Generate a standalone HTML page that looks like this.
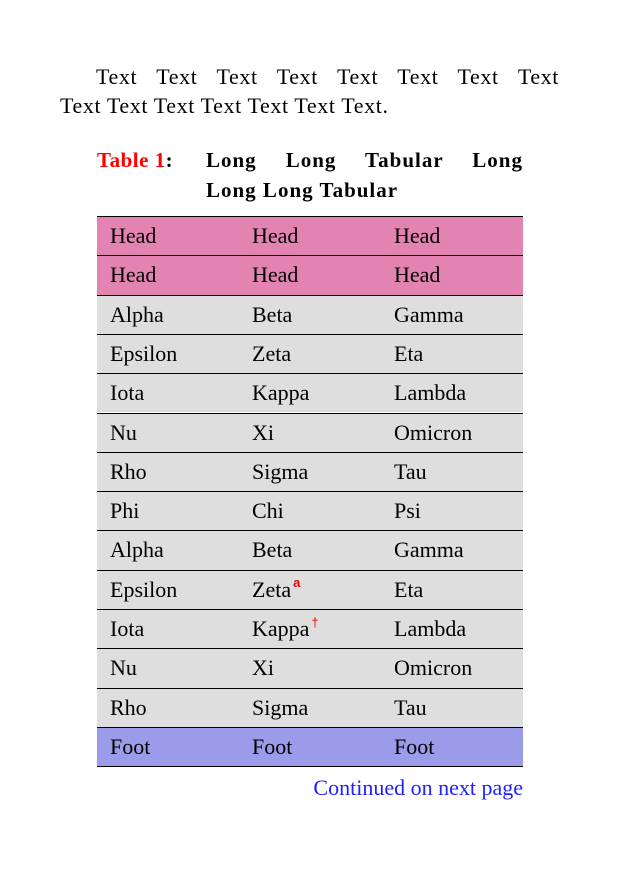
<!DOCTYPE html>
<html><head><meta charset="utf-8"><style>
body{margin:0;width:621px;height:875px;background:#fff;font-family:"Liberation Serif","Times New Roman","DejaVu Serif",serif;color:#000;position:relative;overflow:hidden}
.a{position:absolute;white-space:nowrap;font-size:22px;line-height:1}
.row{position:absolute;left:97px;width:426px;height:39.3px;border-top:1px solid #000;box-sizing:border-box}
.row span{position:absolute;top:8px;font-size:22px;line-height:1}
.c1{left:13px}.c2{left:155px}.c3{left:297px}
sup{font-family:"Liberation Sans","DejaVu Sans",sans-serif;color:#e00;font-size:13px;font-weight:bold;position:relative;top:-1px;margin-left:2px;vertical-align:super;line-height:0}
</style></head><body>
<div class="a" style="left:96px;top:66px;width:463px;text-align:justify;text-align-last:justify;letter-spacing:0.6px">Text Text Text Text Text Text Text Text</div>
<div class="a" style="left:60px;top:95px;letter-spacing:0.6px">Text Text Text Text Text Text Text.</div>
<div class="a" style="left:97px;top:150px;font-weight:bold;font-size:21px;letter-spacing:0.5px"><span style="color:#f00">Table 1</span>:</div>
<div class="a" style="left:206px;top:150px;width:317px;font-weight:bold;font-size:21px;text-align:justify;text-align-last:justify;letter-spacing:1px">Long Long Tabular Long</div>
<div class="a" style="left:206px;top:180px;font-weight:bold;font-size:21px;letter-spacing:1px">Long Long Tabular</div>
<div id="t"></div>
<div class="a" style="left:268px;top:777px;color:#2020ff;width:255px;text-align:right">Continued on next page</div>
<script>
var d=[["Head","Head","Head","#e283b1"],["Head","Head","Head","#e283b1"],["Alpha","Beta","Gamma"],["Epsilon","Zeta","Eta"],["Iota","Kappa","Lambda"],["Nu","Xi","Omicron"],["Rho","Sigma","Tau"],["Phi","Chi","Psi"],["Alpha","Beta","Gamma"],["Epsilon","Zeta<sup>a</sup>","Eta"],["Iota","Kappa<sup style=\"font-weight:normal\">†</sup>","Lambda"],["Nu","Xi","Omicron"],["Rho","Sigma","Tau"],["Foot","Foot","Foot","#9b9be9"]];
var h="";d.forEach(function(r,i){var top=216+i*39.3;h+='<div class="row" style="top:'+top.toFixed(1)+'px;background:'+(r[3]||"#dedede")+(i==13?';border-bottom:1px solid #000;height:40.3px':'')+'"><span class="c1">'+r[0]+'</span><span class="c2">'+r[1]+'</span><span class="c3">'+r[2]+'</span></div>';});
document.getElementById("t").innerHTML=h;
</script>
</body></html>
